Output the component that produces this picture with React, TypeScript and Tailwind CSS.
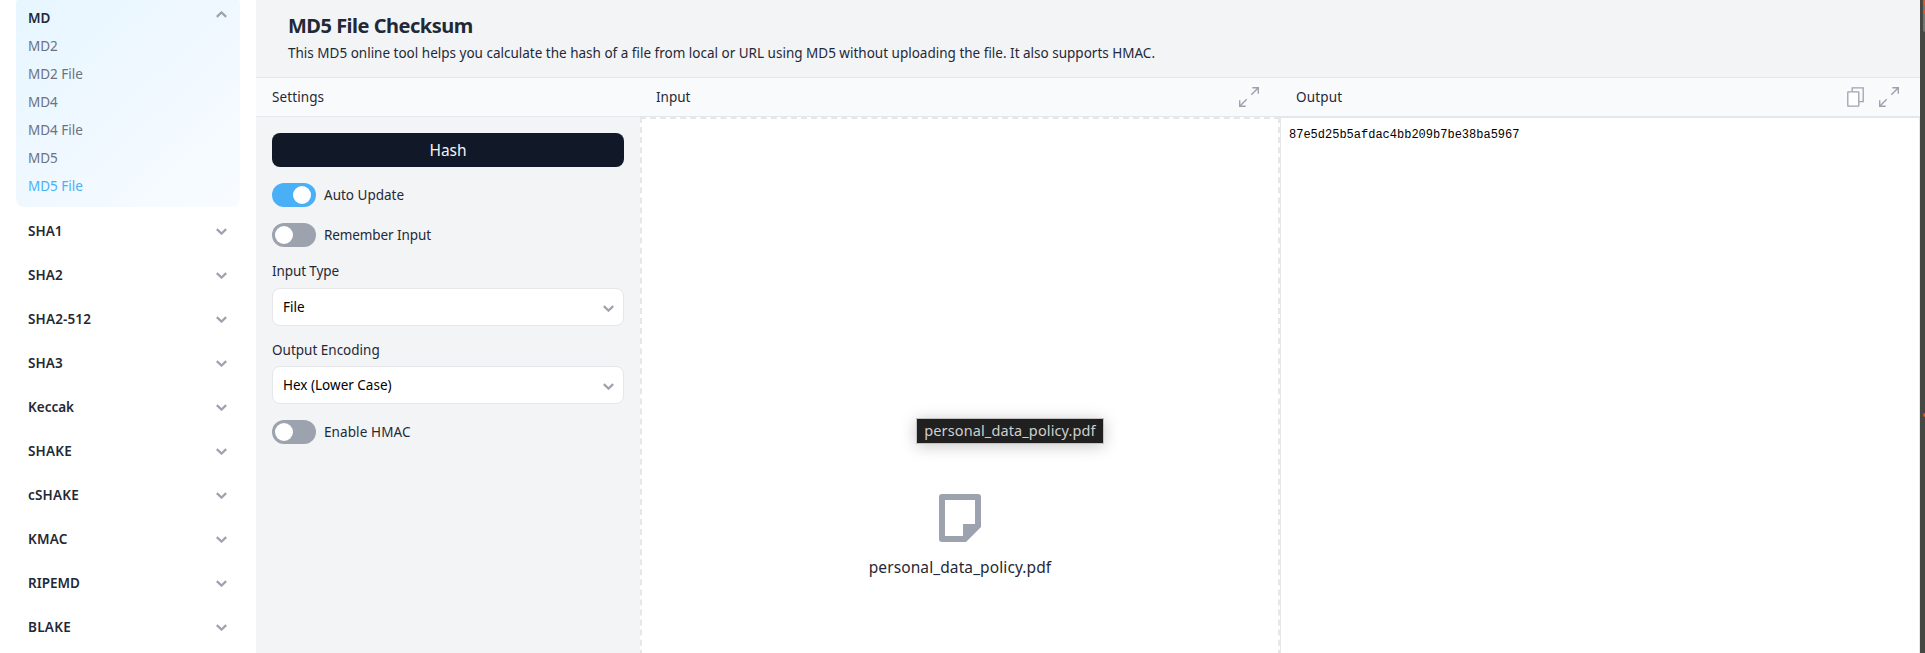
import type { ReactNode } from "react";

const SUB_ITEMS = [
  { label: "MD2", tracking: "" },
  { label: "MD2 File", tracking: "" },
  { label: "MD4", tracking: "" },
  { label: "MD4 File", tracking: "" },
  { label: "MD5", tracking: "" },
  { label: "MD5 File", tracking: "", active: true },
];

const GROUPS = [
  { label: "SHA1", tracking: "" },
  { label: "SHA2", tracking: "tracking-[0.1px]" },
  { label: "SHA2-512", tracking: "tracking-[0.15px]" },
  { label: "SHA3", tracking: "tracking-[0.1px]" },
  { label: "Keccak", tracking: "" },
  { label: "SHAKE", tracking: "tracking-[0.2px]" },
  { label: "cSHAKE", tracking: "tracking-[0.2px]" },
  { label: "KMAC", tracking: "tracking-[0.2px]" },
  { label: "RIPEMD", tracking: "" },
  { label: "BLAKE", tracking: "tracking-[0.3px]" },
];

function Chevron({ up = false }: { up?: boolean }) {
  return (
    <svg className="h-[7px] w-[11px] shrink-0" viewBox="0 0 11 7" fill="none" stroke="#9ca3af" strokeWidth="2.2">
      <path d={up ? "M0.8 5.9 5.5 1.4 10.2 5.9" : "M0.8 1.1 5.5 5.6 10.2 1.1"} />
    </svg>
  );
}

function ExpandIcon() {
  return (
    <svg className="size-5 shrink-0" viewBox="0 0 20 20" fill="none" stroke="#9ca3af" strokeWidth="1.4">
      <path d="M13.3 0.7H19.3V6.7M19.3 0.7 12.3 7.7M6.7 19.3H0.7V13.3M0.7 19.3 7.7 12.3" />
    </svg>
  );
}

function CopyIcon() {
  return (
    <svg className="h-5 w-[17px] shrink-0" viewBox="0 0 17 20" fill="none" stroke="#9ca3af" strokeWidth="1.3">
      <path d="M5.2 4.5V0.9H16.2V14.7H12.2" />
      <rect x="0.8" y="4.8" width="11" height="14.4" rx="0.5" fill="#fff" />
    </svg>
  );
}

function Switch({ on = false, children }: { on?: boolean; children: ReactNode }) {
  return (
    <div className="flex h-6 items-center gap-2">
      <div
        className={
          on
            ? "flex h-6 w-11 items-center justify-end rounded-full bg-[#49b0f7] px-[5px]"
            : "flex h-6 w-11 items-center rounded-full bg-[#9ca3af] px-[3px]"
        }
      >
        <div className="size-[18px] rounded-full bg-white" />
      </div>
      {children}
    </div>
  );
}

function Select({ children }: { children: ReactNode }) {
  return (
    <div className="flex h-[38px] items-center justify-between rounded-lg border border-[#e5e7eb] bg-white pr-[9px] pl-2.5 text-black">
      {children}
      <div className="pt-0.5">
        <Chevron />
      </div>
    </div>
  );
}

export default function App() {
  return (
    <div className="flex h-[653px] w-[1925px] overflow-hidden bg-white font-['Noto_Sans',sans-serif] text-[13.5px] leading-5 text-[#1f2937]">
      <aside className="w-64 shrink-0 px-4">
        <div className="-mt-1 flex h-[211px] flex-col rounded-lg bg-linear-to-br from-[#e6f6ff] via-[#f0f8ff] to-[#f8fcff] px-3 pt-3">
          <div className="flex h-5 items-start justify-between">
            <span className="font-semibold">MD</span>
            <div className="mt-[3px] mr-px">
              <Chevron up />
            </div>
          </div>
          <ul>
            {SUB_ITEMS.map((item) => (
              <li key={item.label} className={item.active ? "mt-2 h-5 text-[#49b0f7]" : "mt-2 h-5 text-[#6b7280]"}>
                <span className={item.tracking}>{item.label}</span>
              </li>
            ))}
          </ul>
        </div>
        <div className="mt-0.5">
          {GROUPS.map((group) => (
            <div key={group.label} className="flex h-11 items-center justify-between pr-[13px] pl-3">
              <span className={`font-semibold ${group.tracking}`}>{group.label}</span>
              <Chevron />
            </div>
          ))}
        </div>
      </aside>

      <main className="flex w-[1664px] shrink-0 flex-col bg-[#f3f4f6]">
        <header className="h-[77px] shrink-0 px-8 pt-3">
          <h1 className="h-7 text-[20px] leading-7 font-bold tracking-[-0.5px]">MD5 File Checksum</h1>
          <p className="pt-[3px]">
            This MD5 online tool helps you calculate the hash of a file from local or URL using MD5 without uploading
            the file. It also supports HMAC.
          </p>
        </header>
        <div className="flex h-10 shrink-0 items-center border-y border-[#e5e7eb] bg-[#f9fafc]">
          <div className="w-96 pl-4">
            <span className="tracking-[0.1px]">Settings</span>
          </div>
          <div className="flex w-[640px] items-center justify-between pr-[21px] pl-4">
            <span>Input</span>
            <ExpandIcon />
          </div>
          <div className="flex w-[640px] items-center pr-[21px] pl-4">
            <span className="grow tracking-[0.15px]">Output</span>
            <div className="flex items-center gap-[15px]">
              <CopyIcon />
              <ExpandIcon />
            </div>
          </div>
        </div>

        <div className="flex min-h-0 grow">
          <section className="flex w-96 shrink-0 flex-col px-4 pt-4">
            <button className="flex h-[34px] items-center justify-center rounded-lg bg-[#111827] text-[15.5px] text-[#f3f4f6]">
              Hash
            </button>
            <div className="mt-4">
              <Switch on>
                <span>Auto Update</span>
              </Switch>
            </div>
            <div className="mt-4">
              <Switch>
                <span className="tracking-[-0.1px]">Remember Input</span>
              </Switch>
            </div>
            <div className="mt-3.5 mb-[7px] h-5 tracking-[-0.1px]">Input Type</div>
            <Select>
              <span>File</span>
            </Select>
            <div className="mt-3.5 mb-1.5 h-5">Output Encoding</div>
            <Select>
              <span>Hex (Lower Case)</span>
            </Select>
            <div className="mt-4">
              <Switch>
                <span className="tracking-[0.1px]">Enable HMAC</span>
              </Switch>
            </div>
          </section>

          <section className="relative flex h-[800px] w-[640px] shrink-0 flex-col items-center border-2 border-dashed border-[#e5e7eb] bg-white">
            <svg className="mt-[375px] h-12 w-[42px]" viewBox="0 0 42 48" fill="#9ca3af">
              <path
                fillRule="evenodd"
                d="M3 0H39Q42 0 42 3V33L27 48H3Q0 48 0 45V3Q0 0 3 0ZM6 6V42H24V30H36V6Z"
              />
            </svg>
            <div className="mt-[13px] text-[15.5px] leading-6 tracking-[0.1px]">personal_data_policy.pdf</div>
            <div className="absolute top-[299px] left-[274px] flex h-[26px] w-[188px] items-center justify-center border border-[#c4c4c4] bg-[#202020] pb-0.5 text-[14.5px] tracking-[0.12px] text-[#cfcfcf] shadow-[0_2px_16px_rgba(0,0,0,0.22)]">
              personal_data_policy.pdf
            </div>
          </section>

          <section className="grow border-x border-t border-[#e5e7eb] bg-white pt-[7px] pl-2 font-['Liberation_Mono',monospace] text-[12px] leading-5 text-black">
            87e5d25b5afdac4bb209b7be38ba5967
          </section>
        </div>
      </main>
      <div className="flex w-[5px] shrink-0 flex-col items-end bg-[#454843]">
        <div className="flex h-8 w-0.5 flex-col gap-[5px] rounded-bl-sm bg-[#747672]">
          <div className="h-[5px] shrink-0 rounded-l-full bg-[#e95420]" />
          <div className="h-1 shrink-0 rounded-l-full bg-[#e95420]" />
        </div>
        <div className="mt-[381px] h-1 w-0.5 rounded-l-full bg-[#e95420]" />
      </div>
    </div>
  );
}
